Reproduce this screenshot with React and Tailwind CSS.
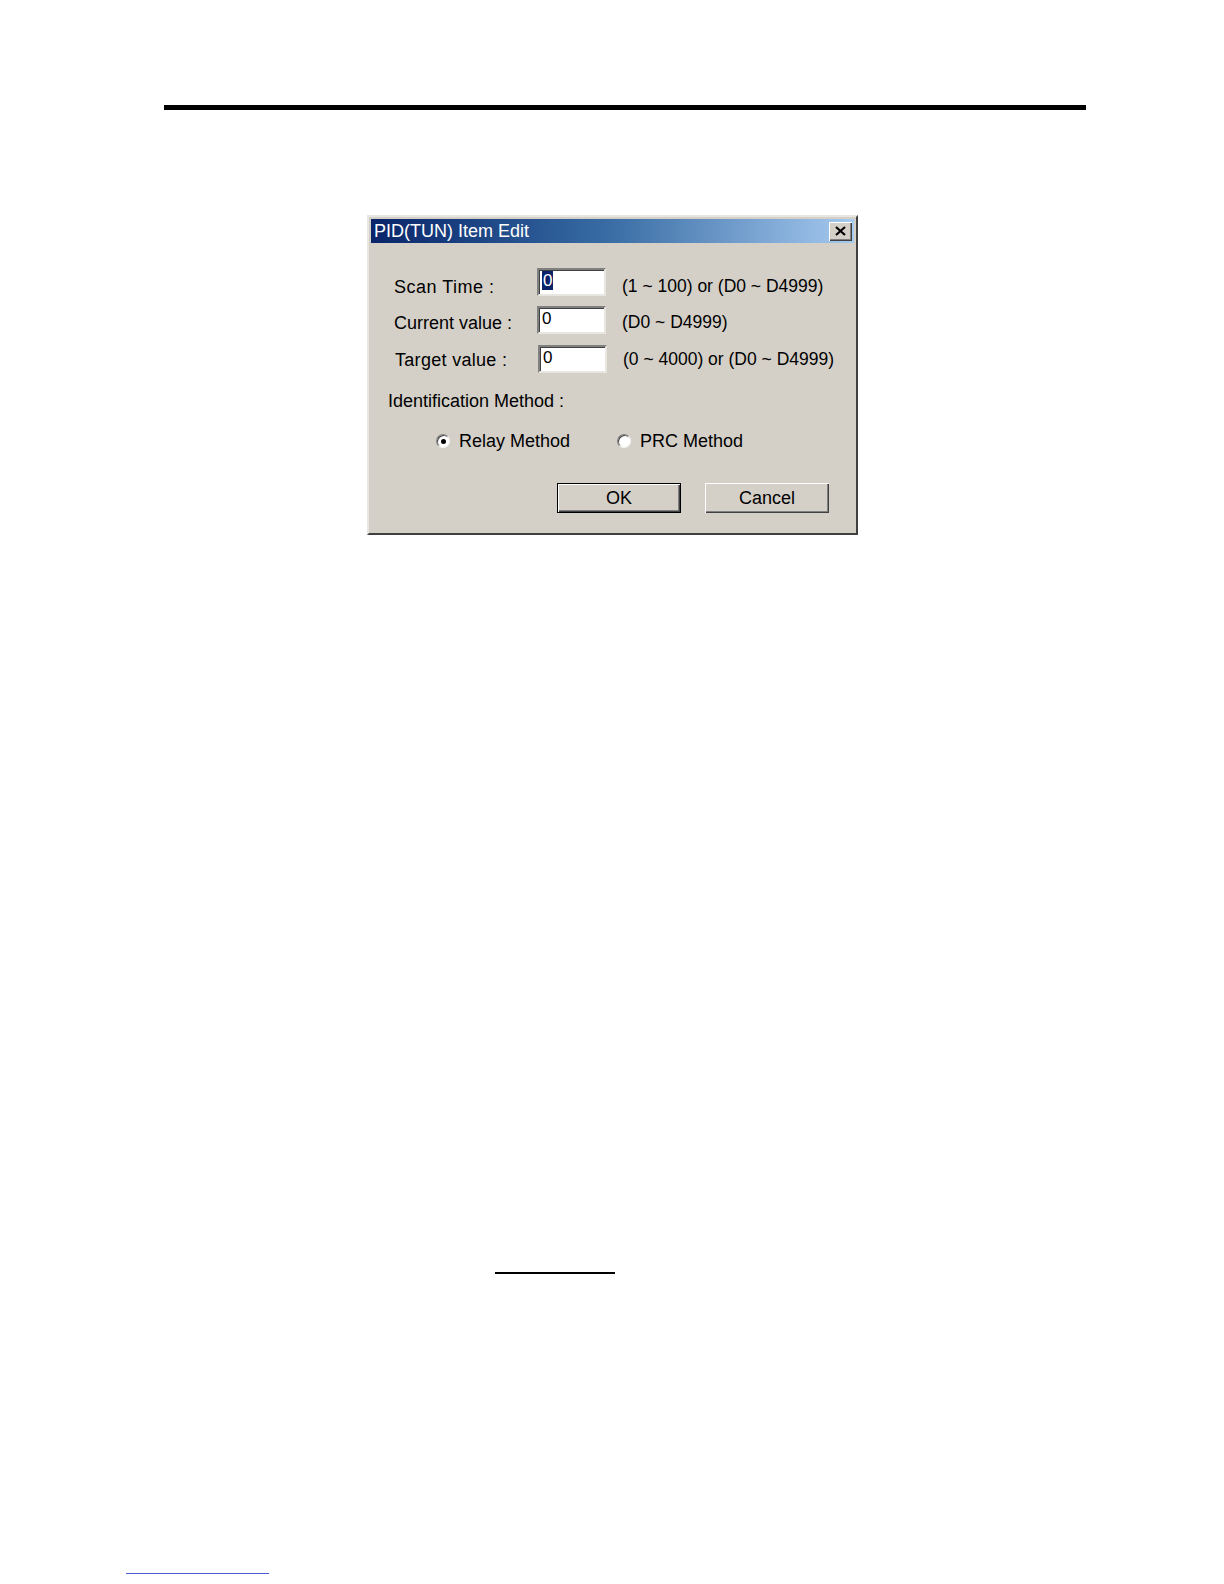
import React from "react";

const font = { fontFamily: '"Liberation Sans", Arial, sans-serif' };

function Field({ label, hint, selected, className = "", shift = "translate-y-[3px]", labelClass = "" }) {
  return (
    <div className={`flex items-center h-[28px] ${className}`}>
      <div className={`w-[143px] text-[18px] leading-none text-black whitespace-nowrap ${shift} ${labelClass}`}>{label}</div>
      <div className="w-[69px] h-[28px] bg-white border-2 border-t-[#808080] border-l-[#808080] border-r-[#e8e6e0] border-b-[#e8e6e0] shadow-[inset_1px_1px_0_#404040] flex items-start pt-[1px] pl-[3px]">
        {selected ? (
          <span className="bg-[#0a246a] text-white text-[17px] leading-[19px] px-[1px]">0</span>
        ) : (
          <span className="text-black text-[17px] leading-[19px]">0</span>
        )}
      </div>
      <div className={`ml-[16px] text-[17.5px] leading-none text-black whitespace-nowrap ${shift}`}>{hint}</div>
    </div>
  );
}

function Radio({ checked, label }) {
  return (
    <div className="flex items-center">
      <div className="w-[14px] h-[14px] rounded-full bg-white border border-t-[#808080] border-l-[#808080] border-r-[#f4f4f4] border-b-[#f4f4f4] shadow-[inset_1px_1px_0_#404040] flex items-center justify-center">
        {checked && <div className="w-[5px] h-[5px] rounded-full bg-black" />}
      </div>
      <span className="ml-[9px] text-[18px] leading-none text-black">{label}</span>
    </div>
  );
}

function Button({ children, isDefault }) {
  return (
    <div
      className={`w-[124px] h-[30px] flex items-center justify-center text-[18px] text-black bg-[#d4d0c8] shadow-[inset_1px_1px_0_#ffffff,inset_-1px_-1px_0_#404040,inset_-2px_-2px_0_#808080] ${
        isDefault ? "border border-black" : ""
      }`}
    >
      {children}
    </div>
  );
}

export default function App() {
  return (
    <div className="relative w-[1224px] h-[1584px] bg-white overflow-hidden" style={font}>
      <div className="pt-[105px]">
        <div className="ml-[164px] w-[922px] h-[5px] bg-black" />

        {/* dialog */}
        <div className="mt-[105px] ml-[367px] w-[491px] h-[320px] bg-[#d4d0c8] border-2 border-t-[#e8e6e0] border-l-[#e8e6e0] border-r-[#404040] border-b-[#404040] p-[2px] flex flex-col">
          <div className="h-[24px] flex items-center justify-between pl-[3px] pr-[2px] bg-gradient-to-r from-[#0a246a] via-[#3a6ea5] to-[#a6caf0]">
            <span className="text-white text-[18px] leading-none">PID(TUN) Item Edit</span>
            <div className="w-[23px] h-[19px] bg-[#d4d0c8] shadow-[inset_1px_1px_0_#ffffff,inset_-1px_-1px_0_#404040,inset_-2px_-2px_0_#808080] flex items-center justify-center">
              <svg width="11" height="10" viewBox="0 0 11 10">
                <path d="M1 1 L10 9 M10 1 L1 9" stroke="#000" strokeWidth="2.2" />
              </svg>
            </div>
          </div>

          <div className="pl-[23px] pt-[25px]">
            <Field label="Scan Time :" hint="(1 ~ 100) or (D0 ~ D4999)" selected shift="translate-y-[5px]" labelClass="tracking-[0.5px]" />
            <Field className="mt-[10px]" label="Current value :" hint="(D0 ~ D4999)" />
            <Field className="mt-[11px] pl-[1px]" label="Target value :" hint="(0 ~ 4000) or (D0 ~ D4999)" shift="translate-y-[1px]" labelClass="tracking-[0.3px]" />

            <div className="mt-[18px] -ml-[6px] h-[20px] flex items-center text-[18px] text-black">
              Identification Method :
            </div>

            <div className="mt-[20px] ml-[42px] h-[20px] flex items-center">
              <div className="w-[181px]">
                <Radio checked label="Relay Method" />
              </div>
              <Radio label="PRC Method" />
            </div>
          </div>

          <div className="mt-[32px] flex justify-end pr-[25px] gap-[24px]">
            <Button isDefault>OK</Button>
            <Button>Cancel</Button>
          </div>
        </div>
      </div>

      <div className="absolute left-[495px] top-[1272px] w-[120px] h-[2px] bg-black" />
      <div className="absolute left-[126px] top-[1573px] w-[143px] h-[1px] bg-[#4a5ad8]" />
    </div>
  );
}
